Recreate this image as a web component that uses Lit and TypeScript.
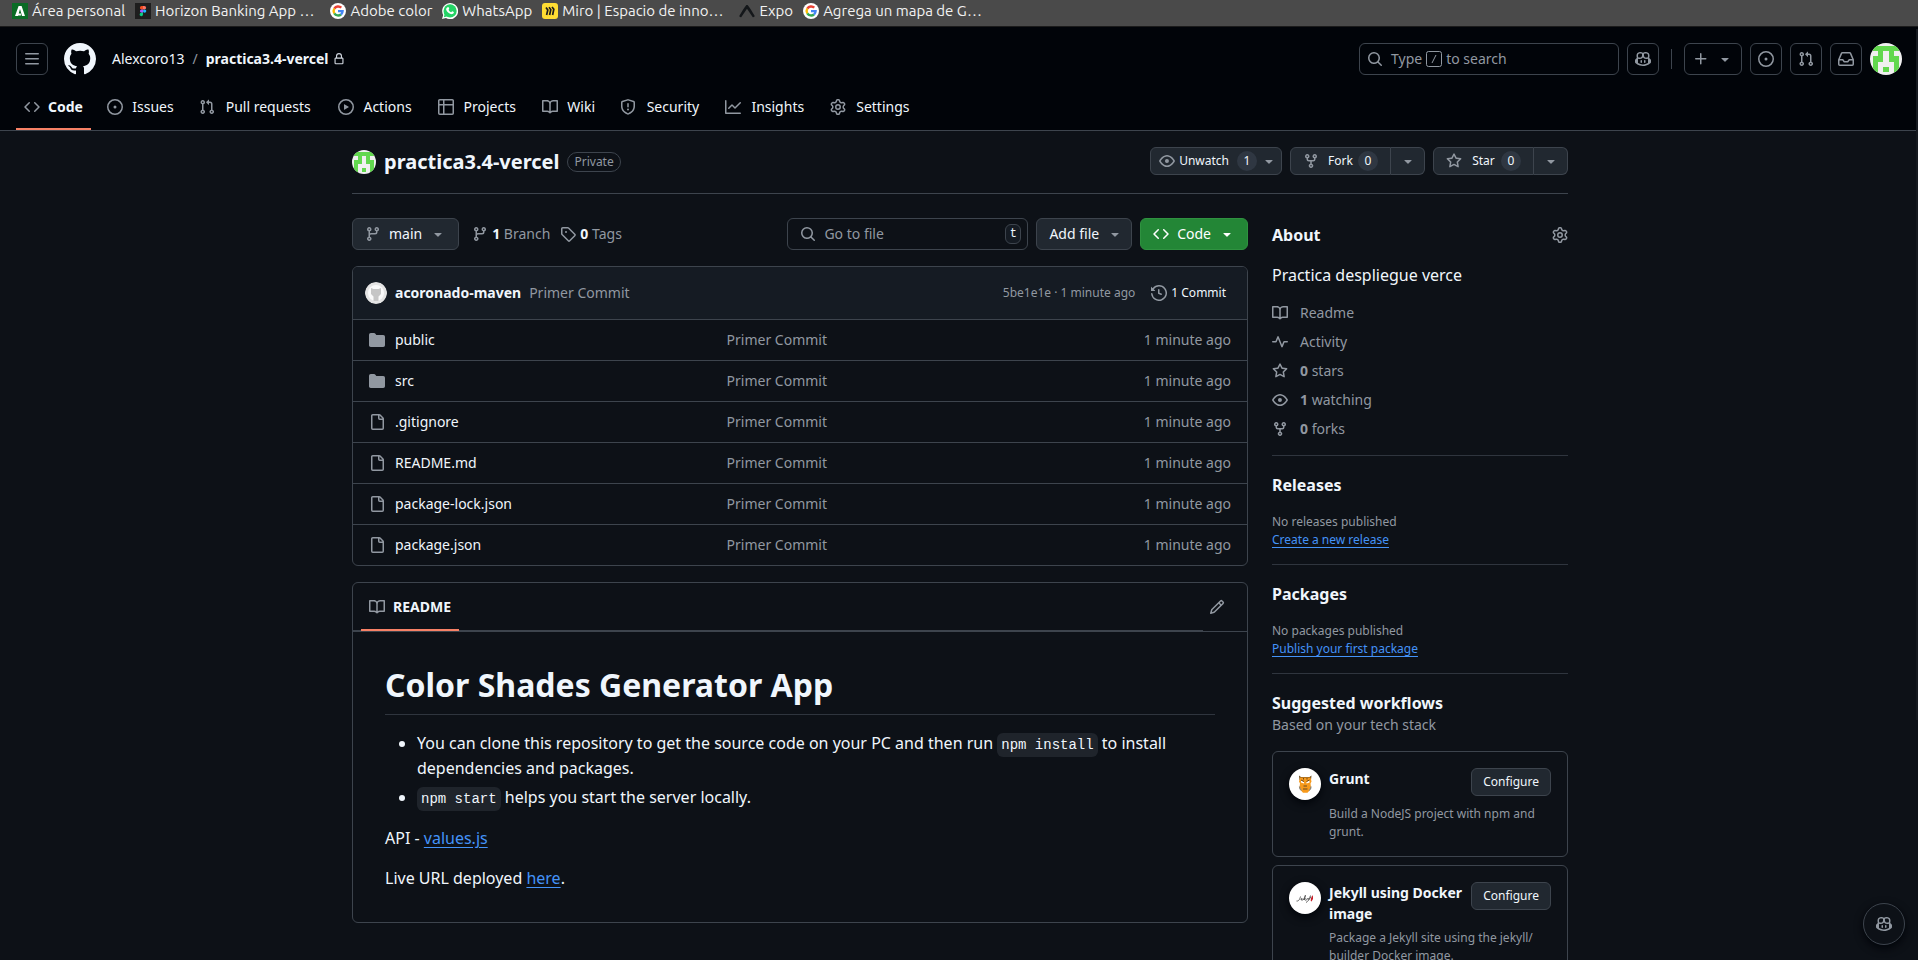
import { LitElement, html, css, svg, nothing } from "lit";
import { customElement } from "lit/decorators.js";

const paths: Record<string, string> = {
  menu: "M1 2.75A.75.75 0 0 1 1.75 2h12.5a.75.75 0 0 1 0 1.5H1.75A.75.75 0 0 1 1 2.75Zm0 5A.75.75 0 0 1 1.75 7h12.5a.75.75 0 0 1 0 1.5H1.75A.75.75 0 0 1 1 7.75ZM1.75 12h12.5a.75.75 0 0 1 0 1.5H1.75a.75.75 0 0 1 0-1.5Z",
  mark: "M8 0c4.42 0 8 3.58 8 8a8.013 8.013 0 0 1-5.45 7.59c-.4.08-.55-.17-.55-.38 0-.27.01-1.13.01-2.2 0-.75-.25-1.23-.54-1.48 1.78-.2 3.65-.88 3.65-3.95 0-.88-.31-1.59-.82-2.15.08-.2.36-1.02-.08-2.12 0 0-.67-.22-2.2.82-.64-.18-1.32-.27-2-.27-.68 0-1.36.09-2 .27-1.53-1.03-2.2-.82-2.2-.82-.44 1.1-.16 1.92-.08 2.12-.51.56-.82 1.28-.82 2.15 0 3.06 1.86 3.75 3.64 3.95-.23.2-.44.55-.51 1.07-.46.21-1.61.55-2.33-.66-.15-.24-.6-.83-1.23-.82-.67.01-.27.38.01.53.34.19.73.9.82 1.13.16.45.68 1.31 2.69.94 0 .67.01 1.3.01 1.49 0 .21-.15.45-.55.38A7.995 7.995 0 0 1 0 8c0-4.42 3.58-8 8-8Z",
  lock: "M4 4a4 4 0 0 1 8 0v2h.25c.966 0 1.75.784 1.75 1.75v5.5A1.75 1.75 0 0 1 12.25 15h-8.5A1.75 1.75 0 0 1 2 13.25v-5.5C2 6.784 2.784 6 3.75 6H4Zm8.25 3.5h-8.5a.25.25 0 0 0-.25.25v5.5c0 .138.112.25.25.25h8.5a.25.25 0 0 0 .25-.25v-5.5a.25.25 0 0 0-.25-.25ZM10.5 6V4a2.5 2.5 0 1 0-5 0v2Z",
  code: "m11.28 3.22 4.25 4.25a.75.75 0 0 1 0 1.06l-4.25 4.25a.749.749 0 0 1-1.275-.326.749.749 0 0 1 .215-.734L13.94 8l-3.72-3.72a.749.749 0 0 1 .326-1.275.749.749 0 0 1 .734.215Zm-6.56 0a.751.751 0 0 1 1.042.018.751.751 0 0 1 .018 1.042L2.06 8l3.72 3.72a.749.749 0 0 1-.326 1.275.749.749 0 0 1-.734-.215L.47 8.53a.75.75 0 0 1 0-1.06Z",
  issue: "M8 9.5a1.5 1.5 0 1 0 0-3 1.5 1.5 0 0 0 0 3ZM8 0a8 8 0 1 1 0 16A8 8 0 0 1 8 0ZM1.5 8a6.5 6.5 0 1 0 13 0 6.5 6.5 0 0 0-13 0Z",
  pull: "M1.5 3.25a2.25 2.25 0 1 1 3 2.122v5.256a2.251 2.251 0 1 1-1.5 0V5.372A2.25 2.25 0 0 1 1.5 3.25Zm5.677-.177L9.573.677A.25.25 0 0 1 10 .854V2.5h1A2.5 2.5 0 0 1 13.5 5v5.628a2.251 2.251 0 1 1-1.5 0V5a1 1 0 0 0-1-1h-1v1.646a.25.25 0 0 1-.427.177L7.177 3.427a.25.25 0 0 1 0-.354ZM3.75 2.5a.75.75 0 1 0 0 1.5.75.75 0 0 0 0-1.5Zm0 9.5a.75.75 0 1 0 0 1.5.75.75 0 0 0 0-1.5Zm8.25.75a.75.75 0 1 0 1.5 0 .75.75 0 0 0-1.5 0Z",
  play: "M8 0a8 8 0 1 1 0 16A8 8 0 0 1 8 0ZM1.5 8a6.5 6.5 0 1 0 13 0 6.5 6.5 0 0 0-13 0Zm4.879-2.773 4.264 2.559a.25.25 0 0 1 0 .428l-4.264 2.559A.25.25 0 0 1 6 10.559V5.442a.25.25 0 0 1 .379-.215Z",
  table: "M0 1.75C0 .784.784 0 1.75 0h12.5C15.216 0 16 .784 16 1.75v12.5A1.75 1.75 0 0 1 14.25 16H1.75A1.75 1.75 0 0 1 0 14.25ZM6.5 6.5v8h7.75a.25.25 0 0 0 .25-.25V6.5Zm8-1.5V1.75a.25.25 0 0 0-.25-.25H6.5V5Zm-13 1.5v7.75c0 .138.112.25.25.25H5v-8ZM5 5V1.5H1.75a.25.25 0 0 0-.25.25V5Z",
  book: "M0 1.75A.75.75 0 0 1 .75 1h4.253c1.227 0 2.317.59 3 1.501A3.743 3.743 0 0 1 11.006 1h4.245a.75.75 0 0 1 .75.75v10.5a.75.75 0 0 1-.75.75h-4.507a2.25 2.25 0 0 0-1.591.659l-.622.621a.75.75 0 0 1-1.06 0l-.622-.621A2.25 2.25 0 0 0 5.258 13H.75a.75.75 0 0 1-.75-.75Zm7.251 10.324.004-5.073-.002-2.253A2.25 2.25 0 0 0 5.003 2.5H1.5v9h3.757a3.75 3.75 0 0 1 1.994.574ZM8.755 4.75l-.004 7.322a3.752 3.752 0 0 1 1.992-.572H14.5v-9h-3.495a2.25 2.25 0 0 0-2.25 2.25Z",
  shield: "M7.467.133a1.748 1.748 0 0 1 1.066 0l5.25 1.68A1.75 1.75 0 0 1 15 3.48V7c0 1.566-.32 3.182-1.303 4.682-.983 1.498-2.585 2.813-5.032 3.855a1.697 1.697 0 0 1-1.33 0c-2.447-1.042-4.049-2.357-5.032-3.855C1.32 10.182 1 8.566 1 7V3.48a1.75 1.75 0 0 1 1.217-1.667Zm.61 1.429a.25.25 0 0 0-.153 0l-5.25 1.68a.25.25 0 0 0-.174.238V7c0 1.358.275 2.666 1.057 3.86.784 1.194 2.121 2.34 4.366 3.297a.196.196 0 0 0 .154 0c2.245-.956 3.582-2.104 4.366-3.298C13.225 9.666 13.5 8.36 13.5 7V3.48a.251.251 0 0 0-.174-.237l-5.25-1.68ZM8.75 4.75v3a.75.75 0 0 1-1.5 0v-3a.75.75 0 0 1 1.5 0ZM9 10.5a1 1 0 1 1-2 0 1 1 0 0 1 2 0Z",
  graph: "M1.5 1.75V13.5h13.75a.75.75 0 0 1 0 1.5H.75a.75.75 0 0 1-.75-.75V1.75a.75.75 0 0 1 1.5 0Zm14.28 2.53-5.25 5.25a.75.75 0 0 1-1.06 0L7 7.06 4.28 9.78a.751.751 0 0 1-1.042-.018.751.751 0 0 1-.018-1.042l3.25-3.25a.75.75 0 0 1 1.06 0L10 7.94l4.72-4.72a.751.751 0 0 1 1.042.018.751.751 0 0 1 .018 1.042Z",
  gear: "M8 0a8.2 8.2 0 0 1 .701.031C9.444.095 9.99.645 10.16 1.29l.288 1.107c.018.066.079.158.212.224.231.114.454.243.668.386.123.082.233.09.299.071l1.103-.303c.644-.176 1.392.021 1.82.63.27.385.506.792.704 1.218.315.675.111 1.422-.364 1.891l-.814.806c-.049.048-.098.147-.088.294.016.257.016.515 0 .772-.01.147.038.246.088.294l.814.806c.475.469.679 1.216.364 1.891a7.977 7.977 0 0 1-.704 1.217c-.428.61-1.176.807-1.82.63l-1.102-.302c-.067-.019-.177-.011-.3.071a5.909 5.909 0 0 1-.668.386c-.133.066-.194.158-.211.224l-.29 1.106c-.168.646-.715 1.196-1.458 1.26a8.006 8.006 0 0 1-1.402 0c-.743-.064-1.289-.614-1.458-1.26l-.289-1.106c-.018-.066-.079-.158-.212-.224a5.738 5.738 0 0 1-.668-.386c-.123-.082-.233-.09-.299-.071l-1.103.303c-.644.176-1.392-.021-1.82-.63a8.12 8.12 0 0 1-.704-1.218c-.315-.675-.111-1.422.363-1.891l.815-.806c.05-.048.098-.147.088-.294a6.214 6.214 0 0 1 0-.772c.01-.147-.038-.246-.088-.294l-.815-.806C.635 6.045.431 5.298.746 4.623a7.92 7.92 0 0 1 .704-1.217c.428-.61 1.176-.807 1.82-.63l1.102.302c.067.019.177.011.3-.071.214-.143.437-.272.668-.386.133-.066.194-.158.211-.224l.29-1.106C6.009.645 6.556.095 7.299.03 7.53.01 7.764 0 8 0Zm-.571 1.525c-.036.003-.108.036-.137.146l-.289 1.105c-.147.561-.549.967-.998 1.189-.173.086-.34.183-.5.29-.417.278-.97.423-1.529.27l-1.103-.303c-.109-.03-.175.016-.195.045-.22.312-.412.644-.573.99-.014.031-.021.11.059.19l.815.806c.411.406.562.957.53 1.456a4.709 4.709 0 0 0 0 .582c.032.499-.119 1.05-.53 1.456l-.815.806c-.081.08-.073.159-.059.19.162.346.353.677.573.989.02.03.085.076.195.046l1.102-.303c.56-.153 1.113-.008 1.53.27.161.107.328.204.501.29.447.222.85.629.997 1.189l.289 1.105c.029.109.101.143.137.146a6.6 6.6 0 0 0 1.142 0c.036-.003.108-.036.137-.146l.289-1.105c.147-.561.549-.967.998-1.189.173-.086.34-.183.5-.29.417-.278.97-.423 1.529-.27l1.103.303c.109.029.175-.016.195-.045.22-.313.411-.644.573-.99.014-.031.021-.11-.059-.19l-.815-.806c-.411-.406-.562-.957-.53-1.456a4.709 4.709 0 0 0 0-.582c-.032-.499.119-1.05.53-1.456l.815-.806c.081-.08.073-.159.059-.19a6.464 6.464 0 0 0-.573-.989c-.02-.03-.085-.076-.195-.046l-1.102.303c-.56.153-1.113.008-1.53-.27a4.44 4.44 0 0 0-.501-.29c-.447-.222-.85-.629-.997-1.189l-.289-1.105c-.029-.11-.101-.143-.137-.146a6.6 6.6 0 0 0-1.142 0ZM11 8a3 3 0 1 1-6 0 3 3 0 0 1 6 0ZM9.5 8a1.5 1.5 0 1 0-3.001.001A1.5 1.5 0 0 0 9.5 8Z",
  search: "M10.68 11.74a6 6 0 0 1-7.922-8.982 6 6 0 0 1 8.982 7.922l3.04 3.04a.749.749 0 0 1-.326 1.275.749.749 0 0 1-.734-.215ZM11.5 7a4.499 4.499 0 1 0-8.997 0A4.499 4.499 0 0 0 11.5 7Z",
  copilot: "M7.998 15.035c-4.562 0-7.873-2.914-7.998-3.749V9.338c.085-.628.677-1.686 1.588-2.065.013-.07.024-.143.036-.218.029-.183.06-.384.126-.612-.201-.508-.254-1.084-.254-1.656 0-.87.128-1.769.693-2.484.579-.733 1.494-1.124 2.724-1.261 1.206-.134 2.262.034 2.944.765.05.053.096.108.139.165.044-.057.094-.112.143-.165.682-.731 1.738-.899 2.944-.765 1.23.137 2.145.528 2.724 1.261.566.715.693 1.614.693 2.484 0 .572-.053 1.148-.254 1.656.066.228.098.429.126.612.012.076.024.148.037.218.924.385 1.522 1.471 1.591 2.095v1.872c0 .766-3.351 3.795-8.002 3.795Zm0-1.485c2.28 0 4.584-1.11 5.002-1.433V7.862l-.023-.116c-.49.21-1.075.291-1.727.291-1.146 0-2.059-.327-2.71-.991A3.222 3.222 0 0 1 8 6.303a3.24 3.24 0 0 1-.544.743c-.65.664-1.563.991-2.71.991-.652 0-1.236-.081-1.727-.291l-.023.116v4.255c.419.323 2.722 1.433 5.002 1.433ZM6.762 2.83c-.193-.206-.637-.413-1.682-.297-1.019.113-1.479.404-1.713.7-.247.312-.369.789-.369 1.554 0 .793.129 1.171.308 1.371.162.181.519.379 1.442.379.853 0 1.339-.235 1.638-.54.315-.322.527-.827.617-1.553.117-.935-.037-1.395-.241-1.614Zm4.155-.297c-1.044-.116-1.488.091-1.681.297-.204.219-.359.679-.242 1.614.091.726.303 1.231.618 1.553.299.305.784.54 1.638.54.922 0 1.28-.198 1.442-.379.179-.2.308-.578.308-1.371 0-.765-.123-1.242-.37-1.554-.233-.296-.693-.587-1.713-.7ZM6.25 9.037a.75.75 0 0 1 .75.75v1.501a.75.75 0 0 1-1.5 0V9.787a.75.75 0 0 1 .75-.75Zm4.25.75v1.501a.75.75 0 0 1-1.5 0V9.787a.75.75 0 0 1 1.5 0Z",
  plus: "M7.75 2a.75.75 0 0 1 .75.75V7h4.25a.75.75 0 0 1 0 1.5H8.5v4.25a.75.75 0 0 1-1.5 0V8.5H2.75a.75.75 0 0 1 0-1.5H7V2.75A.75.75 0 0 1 7.75 2Z",
  caret: "m4.427 7.427 3.396 3.396a.25.25 0 0 0 .354 0l3.396-3.396A.25.25 0 0 0 11.396 7H4.604a.25.25 0 0 0-.177.427Z",
  inbox: "M2.8 2.06A1.75 1.75 0 0 1 4.41 1h7.18c.7 0 1.333.417 1.61 1.06l2.74 6.395c.04.093.06.194.06.295v4.5A1.75 1.75 0 0 1 14.25 15H1.75A1.75 1.75 0 0 1 0 13.25v-4.5c0-.101.02-.202.06-.295Zm1.61.44a.25.25 0 0 0-.23.152L1.887 8H4.75a.75.75 0 0 1 .6.3L6.625 10h2.75l1.275-1.7a.75.75 0 0 1 .6-.3h2.863L11.82 2.652a.25.25 0 0 0-.23-.152Zm10.09 7h-2.875l-1.275 1.7a.75.75 0 0 1-.6.3h-3.5a.75.75 0 0 1-.6-.3L4.375 9.5H1.5v3.75c0 .138.112.25.25.25h12.5a.25.25 0 0 0 .25-.25Z",
  eye: "M8 2c1.981 0 3.671.992 4.933 2.078 1.27 1.091 2.187 2.345 2.637 3.023a1.62 1.62 0 0 1 0 1.798c-.45.678-1.367 1.932-2.637 3.023C11.67 13.008 9.981 14 8 14c-1.981 0-3.671-.992-4.933-2.078C1.797 10.83.88 9.576.43 8.898a1.62 1.62 0 0 1 0-1.798c.45-.677 1.367-1.931 2.637-3.022C4.33 2.992 6.019 2 8 2ZM1.679 7.932a.12.12 0 0 0 0 .136c.411.622 1.241 1.75 2.366 2.717C5.176 11.758 6.527 12.5 8 12.5c1.473 0 2.825-.742 3.955-1.715 1.124-.967 1.954-2.096 2.366-2.717a.12.12 0 0 0 0-.136c-.412-.621-1.242-1.75-2.366-2.717C10.824 4.242 9.473 3.5 8 3.5c-1.473 0-2.825.742-3.955 1.715-1.124.967-1.954 2.096-2.366 2.717ZM8 10a2 2 0 1 1-.001-3.999A2 2 0 0 1 8 10Z",
  fork: "M5 5.372v.878c0 .414.336.75.75.75h4.5a.75.75 0 0 0 .75-.75v-.878a2.25 2.25 0 1 1 1.5 0v.878a2.25 2.25 0 0 1-2.25 2.25h-1.5v2.128a2.251 2.251 0 1 1-1.5 0V8.5h-1.5A2.25 2.25 0 0 1 3.5 6.25v-.878a2.25 2.25 0 1 1 1.5 0ZM5 3.25a.75.75 0 1 0-1.5 0 .75.75 0 0 0 1.5 0Zm6.75.75a.75.75 0 1 0 0-1.5.75.75 0 0 0 0 1.5Zm-3 8.75a.75.75 0 1 0-1.5 0 .75.75 0 0 0 1.5 0Z",
  star: "M8 .25a.75.75 0 0 1 .673.418l1.882 3.815 4.21.612a.75.75 0 0 1 .416 1.279l-3.046 2.97.719 4.192a.751.751 0 0 1-1.088.791L8 12.347l-3.766 1.98a.75.75 0 0 1-1.088-.79l.72-4.194L.818 6.374a.75.75 0 0 1 .416-1.28l4.21-.611L7.327.668A.75.75 0 0 1 8 .25Zm0 2.445L6.615 5.5a.75.75 0 0 1-.564.41l-3.097.45 2.24 2.184a.75.75 0 0 1 .216.664l-.528 3.084 2.769-1.456a.75.75 0 0 1 .698 0l2.77 1.456-.53-3.084a.75.75 0 0 1 .216-.664l2.24-2.183-3.096-.45a.75.75 0 0 1-.564-.41L8 2.694Z",
  branch: "M9.5 3.25a2.25 2.25 0 1 1 3 2.122V6A2.5 2.5 0 0 1 10 8.5H6a1 1 0 0 0-1 1v1.128a2.251 2.251 0 1 1-1.5 0V5.372a2.25 2.25 0 1 1 1.5 0v1.836A2.493 2.493 0 0 1 6 7h4a1 1 0 0 0 1-1v-.628A2.25 2.25 0 0 1 9.5 3.25Zm-6 0a.75.75 0 1 0 1.5 0 .75.75 0 0 0-1.5 0Zm8.25-.75a.75.75 0 1 0 0 1.5.75.75 0 0 0 0-1.5ZM4.25 12a.75.75 0 1 0 0 1.5.75.75 0 0 0 0-1.5Z",
  tag: "M1 7.775V2.75C1 1.784 1.784 1 2.75 1h5.025c.464 0 .91.184 1.238.513l6.25 6.25a1.75 1.75 0 0 1 0 2.474l-5.026 5.026a1.75 1.75 0 0 1-2.474 0l-6.25-6.25A1.752 1.752 0 0 1 1 7.775Zm1.5 0c0 .066.026.13.073.177l6.25 6.25a.25.25 0 0 0 .354 0l5.025-5.025a.25.25 0 0 0 0-.354l-6.25-6.25a.25.25 0 0 0-.177-.073H2.75a.25.25 0 0 0-.25.25ZM6 5a1 1 0 1 1 0 2 1 1 0 0 1 0-2Z",
  history: "m.427 1.927 1.215 1.215a8.002 8.002 0 1 1-1.6 5.685.75.75 0 1 1 1.493-.154 6.5 6.5 0 1 0 1.18-4.458l1.358 1.358A.25.25 0 0 1 3.896 6H.25A.25.25 0 0 1 0 5.75V2.104a.25.25 0 0 1 .427-.177ZM7.75 4a.75.75 0 0 1 .75.75v2.992l2.028.812a.75.75 0 0 1-.557 1.392l-2.5-1A.751.751 0 0 1 7 8.25v-3.5A.75.75 0 0 1 7.75 4Z",
  folder: "M1.75 1A1.75 1.75 0 0 0 0 2.75v10.5C0 14.216.784 15 1.75 15h12.5A1.75 1.75 0 0 0 16 13.25v-8.5A1.75 1.75 0 0 0 14.25 3H7.5a.25.25 0 0 1-.2-.1l-.9-1.2C6.07 1.26 5.55 1 5 1H1.75Z",
  file: "M2 1.75C2 .784 2.784 0 3.75 0h6.586c.464 0 .909.184 1.237.513l2.914 2.914c.329.328.513.773.513 1.237v9.586A1.75 1.75 0 0 1 13.25 16h-9.5A1.75 1.75 0 0 1 2 14.25Zm1.75-.25a.25.25 0 0 0-.25.25v12.5c0 .138.112.25.25.25h9.5a.25.25 0 0 0 .25-.25V6h-2.75A1.75 1.75 0 0 1 9 4.25V1.5Zm6.75.062V4.25c0 .138.112.25.25.25h2.688l-.011-.013-2.914-2.914-.013-.011Z",
  pencil: "M11.013 1.427a1.75 1.75 0 0 1 2.474 0l1.086 1.086a1.75 1.75 0 0 1 0 2.474l-8.61 8.61c-.21.21-.47.364-.756.445l-3.251.93a.75.75 0 0 1-.927-.928l.929-3.25c.081-.286.235-.547.445-.758l8.61-8.61Zm.176 4.823L9.75 4.81l-6.286 6.287a.253.253 0 0 0-.064.108l-.558 1.953 1.953-.558a.253.253 0 0 0 .108-.064Zm1.238-3.763a.25.25 0 0 0-.354 0L10.811 3.75l1.439 1.44 1.263-1.263a.25.25 0 0 0 0-.354Z",
  pulse: "M6 2c.306 0 .582.187.696.471L10 10.731l1.304-3.26A.751.751 0 0 1 12 7h3.25a.75.75 0 0 1 0 1.5h-2.742l-1.812 4.528a.751.751 0 0 1-1.392 0L6 4.77 4.696 8.03A.75.75 0 0 1 4 8.5H.75a.75.75 0 0 1 0-1.5h2.742l1.812-4.529A.751.751 0 0 1 6 2Z",
};

const icon = (name: string, size = 16) => html`<svg
  class="icon"
  width=${size}
  height=${size}
  viewBox="0 0 16 16"
  fill="currentColor"
  aria-hidden="true"
>
  <path d=${paths[name]}></path>
</svg>`;

const identicon = (size: number) => html`<svg class="avatar" width=${size} height=${size} viewBox="0 0 12 12" aria-hidden="true">
  <rect width="12" height="12" fill="#f0f0f0"></rect>
  <path
    fill="#62d84e"
    shape-rendering="crispEdges"
    d="M1 1h10v2H1zM3 3h2v2H3zM7 3h2v2H7zM1 5h4v2H1zM7 5h4v2H7zM1 7h2v4H1zM9 7h2v4H9zM5 9h2v2H5z"
  ></path>
</svg>`;

const bookmarkArt: Record<string, unknown> = {
  area: svg`<rect width="16" height="16" fill="#0b6b25"/><path d="M3 13 6.6 3h3L13 13h-3L8 6 6 13zM6.5 10.5h2.4v2H6z" fill="#fff"/>`,
  figma: svg`<rect width="16" height="16" fill="#1e1e1e"/>
    <path d="M8 3H6.6a1.7 1.7 0 0 0 0 3.4H8z" fill="#f24e1e"/><path d="M8 3h1.4a1.7 1.7 0 0 1 0 3.4H8z" fill="#ff7262"/>
    <path d="M8 6.4H6.6a1.7 1.7 0 0 0 0 3.4H8z" fill="#a259ff"/><circle cx="9.6" cy="8.1" r="1.7" fill="#1abcfe"/>
    <path d="M8 9.8H6.6A1.7 1.7 0 1 0 8 11.5z" fill="#0acf83"/>`,
  google: svg`<circle cx="8" cy="8" r="8" fill="#fff"/>
    <g fill="none" stroke-width="2.4">
      <path d="M4.3 5.6A4.6 4.6 0 0 1 11.3 4.7" stroke="#ea4335"/>
      <path d="M4.3 10.4A4.6 4.6 0 0 1 4.3 5.6" stroke="#fbbc05"/>
      <path d="M11 11.5A4.6 4.6 0 0 1 4.3 10.4" stroke="#34a853"/>
      <path d="M8 8.1H12.6A4.6 4.6 0 0 1 11 11.5" stroke="#4285f4"/>
    </g>`,
  whatsapp: svg`<path d="M0 16 1.2 12A8 8 0 1 1 4 14.9z" fill="#fff"/><circle cx="8.1" cy="7.9" r="6.6" fill="#25d366"/><path d="m1.8 14.3.9-3.2 2.3 2.3z" fill="#25d366"/>
    <path d="M5.6 4.3c.7-.6 1.1-.1 1.6 1.3.2.6-.7 1-.6 1.3.6 1.1 1.4 1.8 2.5 2.3.4.1.8-1.1 1.3-.9 1.5.6 1.7.8 1.3 1.7-.5 1-1.7 1.4-3 1-2.2-.7-3.800-2.200-4.500-4.200-.3-1 .5-2 1.400-2.500z" fill="#fff"/>`,
  miro: svg`<rect width="16" height="16" rx="3" fill="#ffdd33"/>
    <path d="M4 4.500 5.800 7 4.600 12M7 4.200 8.800 6.600 7.600 12M10 4 11.800 6.200 10.600 12" fill="none" stroke="#1c1c1e" stroke-width="1.700"/>`,
  expo: svg`<path d="M7 2.400c.4-.6 1.600-.6 2 0 2.200 2.700 4.400 6.700 6.600 10.300.5.900-1.300 1.900-2 1.200L8 5.800 2.400 13.900c-.7.700-2.500-.3-2-1.200C2.600 9.100 4.800 5.100 7 2.400z" fill="#14171a"/>`,
};

const bookmarks: [string, string, boolean][] = [
  ["area", "Área personal", false],
  ["figma", "Horizon Banking App …", true],
  ["google", "Adobe color", false],
  ["whatsapp", "WhatsApp", false],
  ["miro", "Miro | Espacio de inno…", true],
  ["expo", "Expo", false],
  ["google", "Agrega un mapa de G…", true],
];

const tabs: [string, string][] = [
  ["code", "Code"],
  ["issue", "Issues"],
  ["pull", "Pull requests"],
  ["play", "Actions"],
  ["table", "Projects"],
  ["book", "Wiki"],
  ["shield", "Security"],
  ["graph", "Insights"],
  ["gear", "Settings"],
];

const files: [string, string][] = [
  ["folder", "public"],
  ["folder", "src"],
  ["file", ".gitignore"],
  ["file", "README.md"],
  ["file", "package-lock.json"],
  ["file", "package.json"],
];

const meta: [string, string, string][] = [
  ["book", "", "Readme"],
  ["pulse", "", "Activity"],
  ["star", "0", "stars"],
  ["eye", "1", "watching"],
  ["fork", "0", "forks"],
];

const gruntLogo = svg`
  <path d="M10 7.500l2 1.500h8.500l2-1.500-.5 4.500H10.500z" fill="#6b4a1e"/>
  <path d="M11 9.500h10.500l1 4-1 2 .5 4-1.500 3-2 2.300h-4.500l-2-2.300-1.500-3 .5-4-1-2z" fill="#f79a1c"/>
  <path d="M12 12.500l3 1.500v1.500l-3-1zM20.500 12.500l-3 1.500v1.500l3-1z" fill="#fff"/>
  <path d="M12 12l3 1.500M20.500 12l-3 1.500M14.500 18h3.500M14 21h4.500M14.500 10v1.500M18 10v1.500" stroke="#6b4a1e" fill="none"/>
  <path d="M10.500 18.500q0 3 2 4M22 18.500q0 3-2 4" stroke="#8a8478" stroke-width="1.300" fill="none"/>`;

const jekyllLogo = svg`
  <path d="M7.500 19c2.500.5 3.500-2.500 4-4.500M12 18c1.500-.5 1.500-2 .5-1.500s-.5 2 1 1.500 3-3 3-4.500-1.500 3-1.500 4.500c.5-2 2-2 1-1s.5 1.500 1.500 1c1-1 .5-2 1-1.500s1 0 1.500-.5M19.500 18c1-1.500 1.500-3 2-4.500M17 20.500c1.500-.5 4-4 5-6" stroke="#444" stroke-width=".8" fill="none"/>
  <path d="M22 16l2-3v4l-1.500 2.500-.8-.5z" fill="#c8202a"/>`;

const workflows: [unknown, string, string][] = [
  [gruntLogo, "Grunt", "Build a NodeJS project with npm and grunt."],
  [jekyllLogo, "Jekyll using Docker image", "Package a Jekyll site using the jekyll/ builder Docker image."],
];

@customElement("app-root")
export class AppRoot extends LitElement {
  static styles = css`
    :host {
      display: flex;
      flex-direction: column;
      height: 100vh;
      overflow: hidden;
      position: relative;
      background: #0d1117;
      color: #f0f6fc;
      font: 14px/20px "Noto Sans", sans-serif;
    }
    * { box-sizing: border-box; }
    a { color: inherit; text-decoration: none; }
    h1, h2, h3, p, ul { margin: 0; padding: 0; }
    button, input { font: inherit; color: inherit; }
    .icon { display: block; flex: none; color: #9198a1; }
    .avatar { display: block; flex: none; border-radius: 50%; }
    .muted { color: #9198a1; }

    .bookmarks {
      flex: none;
      display: flex;
      align-items: flex-start;
      gap: 10px;
      height: 27px;
      padding: 0 12px;
      background: #4a4a4a;
      border-bottom: 1px solid #1b1b1b;
      color: #f2f2f2;
      font: 15px/22px "Ubuntu", "Noto Sans", sans-serif;
      white-space: nowrap;
    }
    .bookmark { display: flex; align-items: center; gap: 4px; }
    .bookmark.cut { padding-right: 6px; }

    .header { flex: none; background: #010409; border-bottom: 1px solid #3d444d; }
    .bar { display: flex; align-items: center; padding: 16px 16px 0; gap: 8px; }
    .square {
      display: flex;
      align-items: center;
      justify-content: center;
      width: 32px;
      height: 32px;
      padding: 0;
      background: none;
      border: 1px solid #3d444d;
      border-radius: 6px;
    }
    .square.wide { width: 58px; gap: 8px; }
    .logo { margin: 0 8px; color: #f0f6fc; }
    .logo .icon { color: inherit; }
    .crumbs { display: flex; align-items: center; gap: 8px; margin-right: auto; }
    .crumbs strong { display: flex; align-items: center; gap: 4px; }
    .crumbs .icon { color: #d1d7e0; }
    .search {
      display: flex;
      align-items: center;
      gap: 8px;
      width: 260px;
      height: 32px;
      padding: 0 7px;
      background: none;
      border: 1px solid #3d444d;
      border-radius: 6px;
      color: #9198a1;
    }
    .search .hint { display: flex; align-items: center; gap: 4px; }
    .slash { display: block; flex: none; }
    .rule { width: 1px; height: 20px; margin: 0 4px; background: #3d444d; }
    .tabs { display: flex; gap: 8px; padding: 8px 16px 0; }
    .tab { display: flex; align-items: center; gap: 8px; height: 47px; padding: 0 8px; }
    .tab.on { box-shadow: inset 0 -2px #f78166; font-weight: 700; }
    .label { display: grid; justify-items: center; }
    .label::after {
      content: attr(data-text);
      height: 0;
      overflow: hidden;
      visibility: hidden;
      font-weight: 700;
    }

    .scroll { flex: 1; min-height: 0; margin-right: -2px; overflow: hidden; }
    .page { max-width: 1280px; margin: 0 auto; padding: 0 32px; }
    .title { display: flex; align-items: center; gap: 8px; padding: 16px 0; border-bottom: 1px solid #3d444d; }
    .title h1 { font: 700 20px/30px "Noto Sans", sans-serif; }
    .badge {
      padding: 0 6px;
      border: 1px solid #3d444d;
      border-radius: 20px;
      color: #9198a1;
      font-size: 12px;
      line-height: 18px;
    }
    .actions { display: flex; align-self: flex-start; gap: 8px; margin-left: auto; }
    .btn {
      display: flex;
      align-items: center;
      gap: 8px;
      height: 32px;
      padding: 0 12px;
      background: #212830;
      border: 1px solid #3d444d;
      border-radius: 6px;
      white-space: nowrap;
    }
    .btn.tight { padding-right: 8px; }
    .btn.green { background: #238636; border-color: #2f9240; color: #fff; }
    .btn.green .icon { color: #fff; }
    .btn.small { height: 28px; font-size: 12px; line-height: 18px; gap: 4px; }
    .btn.watch { padding: 0 4px 0 8px; }
    .btn.left { border-radius: 6px 0 0 6px; }
    .btn.right { border-radius: 0 6px 6px 0; border-left: 0; padding: 0 8px 0 9px; }
    .split { display: flex; }
    .word { min-width: 31px; padding-left: 4px; text-align: center; }
    .count {
      min-width: 20px;
      padding: 0 6px;
      border-radius: 20px;
      background: #2f3742;
      line-height: 20px;
      text-align: center;
    }
    .watch .count { margin-left: 4px; }

    .columns { display: grid; grid-template-columns: minmax(0, 1fr) 296px; gap: 24px; padding-top: 24px; }
    .tools { display: flex; align-items: center; gap: 8px; }
    .refs { display: flex; gap: 10px; margin: 0 auto 0 5px; }
    .refs a { display: flex; align-items: center; gap: 4px; }
    .refs strong { color: #f0f6fc; }
    .find {
      display: flex;
      align-items: center;
      gap: 8px;
      width: 241px;
      height: 32px;
      padding: 0 6px 0 12px;
      border: 1px solid #3d444d;
      border-radius: 6px;
    }
    .find input { flex: 1; min-width: 0; height: 20px; padding: 0; border: 0; outline: 0; background: none; }
    .find input::placeholder { color: #9198a1; opacity: 1; }
    kbd {
      width: 16px;
      border: 1px solid #3d444d;
      border-radius: 6px;
      background: #151b23;
      font: 12px/18px "Liberation Mono", monospace;
      text-align: center;
    }
    .panel { margin-top: 16px; border: 1px solid #3d444d; border-radius: 6px; overflow: hidden; }
    .commit { display: flex; align-items: center; gap: 8px; height: 52px; padding: 0 21px 0 12px; background: #151b23; }
    .commit .sha { margin-left: auto; font-size: 12px; }
    .commit .log { display: flex; align-items: center; gap: 4px; margin-left: 8px; font-size: 12px; }
    table { width: 100%; table-layout: fixed; border-collapse: separate; border-spacing: 0; }
    td { height: 41px; padding: 0 16px; border-top: 1px solid #3d444d; }
    .c-name { width: 40%; }
    .c-age { width: 20%; }
    td.age { text-align: right; }
    .name { display: flex; align-items: center; gap: 10px; }

    .readme-head { display: flex; align-items: center; height: 49px; border-bottom: 1px solid #3d444d; }
    .readme-head nav { flex: 1; display: flex; height: 48px; padding: 0 8px; box-shadow: inset 0 -1px #3d444d; }
    .readme-head .tab { height: 48px; }
    .edit { display: flex; align-items: center; justify-content: center; width: 28px; height: 28px; margin-right: 16px; padding: 0; border: 0; background: none; }
    .prose { padding: 32px; font-size: 16px; line-height: 24px; }
    .prose h1 { padding-bottom: 8px; border-bottom: 1px solid #2f353e; font-size: 32px; line-height: 42px; font-weight: 700; }
    .prose ul { margin-top: 16px; padding-left: 32px; line-height: 25px; }
    .prose li + li { margin-top: 4px; }
    .prose p { margin-top: 16px; }
    code { padding: 4px; border-radius: 6px; background: #1f242b; font: 14px/16px "Liberation Mono", monospace; }
    .link { color: #4493f8; text-decoration: underline; text-underline-offset: 3px; }

    .side section { padding: 17px 0 15px; border-bottom: 1px solid #2f353e; }
    .side section:first-child { padding: 5px 0 16px; }
    .side section:last-child { border: 0; }
    .side h2 { font-size: 16px; line-height: 24px; font-weight: 700; }
    .side .head { display: flex; align-items: center; justify-content: space-between; margin-bottom: 16px; }
    .edit-about { padding: 0; border: 0; background: none; }
    .about { font-size: 16px; line-height: 24px; margin-bottom: 15px; }
    .facts { display: grid; gap: 8px; list-style: none; line-height: 21px; }
    .facts a { display: flex; align-items: center; gap: 12px; }
    .small-text { font-size: 12px; line-height: 18px; }
    .card {
      display: grid;
      grid-template-columns: 32px minmax(0, 1fr);
      gap: 8px;
      margin-top: 16px;
      padding: 16px 16px 15px;
      border: 1px solid #3d444d;
      border-radius: 6px;
    }
    .card + .card { margin-top: 8px; }
    .card .avatar { background: #fff; box-shadow: 0 3px 8px #010409; }
    .card-head { display: flex; align-items: flex-start; justify-content: space-between; gap: 8px; }
    .card h3 { font-size: 14px; line-height: 21px; font-weight: 700; }
    .card .btn { margin-bottom: 4px; padding: 0 11px; }
    .card p { margin-top: 5px; }

    .fab {
      position: absolute;
      right: 13px;
      bottom: 15px;
      display: flex;
      align-items: center;
      justify-content: center;
      width: 42px;
      height: 42px;
      padding: 0;
      border: 1px solid #3d444d;
      border-radius: 50%;
      background: #0d1117;
      box-shadow: 0 3px 8px #010409;
    }
    .thumb { position: absolute; top: 29px; right: 0; bottom: 25%; width: 2px; background: #15191f; }
  `;

  render() {
    return html`
      <nav class="bookmarks" aria-label="Bookmarks">
        ${bookmarks.map(
          ([art, text, cut]) => html`<a class="bookmark ${cut ? "cut" : ""}" href="#"
            ><svg width="16" height="16" viewBox="0 0 16 16" aria-hidden="true">${bookmarkArt[art]}</svg><span>${text}</span></a
          >`
        )}
      </nav>
      <header class="header">
        <div class="bar">
          <button class="square" aria-label="Open menu">${icon("menu")}</button>
          <a class="logo" href="#" aria-label="Homepage">${icon("mark", 32)}</a>
          <div class="crumbs">
            <a href="#">Alexcoro13</a><span class="muted">/</span>
            <strong><a href="#">practica3.4-vercel</a>${icon("lock", 12)}</strong>
          </div>
          <button class="search">
            ${icon("search")}
            <span class="hint"
              >Type
              <svg class="slash" width="16" height="16" viewBox="0 0 16 16" fill="none" stroke="currentColor" aria-label="/">
                <rect x=".5" y=".5" width="15" height="15" rx="2"></rect>
                <path d="M6 12 10 4"></path></svg
              >to search</span
            >
          </button>
          <button class="square" aria-label="Copilot">${icon("copilot")}</button>
          <span class="rule"></span>
          <button class="square wide" aria-label="Create new">${icon("plus")}${icon("caret")}</button>
          <button class="square" aria-label="Issues">${icon("issue")}</button>
          <button class="square" aria-label="Pull requests">${icon("pull")}</button>
          <button class="square" aria-label="Notifications">${icon("inbox")}</button>
          ${identicon(32)}
        </div>
        <nav class="tabs" aria-label="Repository">
          ${tabs.map(
            ([glyph, text], i) => html`<a class="tab ${i ? "" : "on"}" href="#"
              >${icon(glyph)}<span class="label" data-text=${text}>${text}</span></a
            >`
          )}
        </nav>
      </header>
      <div class="scroll">
        <main class="page">
          <div class="title">
            ${identicon(24)}
            <h1><a href="#">practica3.4-vercel</a></h1>
            <span class="badge">Private</span>
            <div class="actions">
              <button class="btn small watch">
                ${icon("eye")}<span>Unwatch</span><span class="count">1</span>${icon("caret")}
              </button>
              ${[["fork", "Fork"], ["star", "Star"]].map(
                ([glyph, text]) => html`<div class="split">
                  <button class="btn small left">${icon(glyph)}<span class="word">${text}</span><span class="count">0</span></button>
                  <button class="btn small right" aria-label="${text} options">${icon("caret")}</button>
                </div>`
              )}
            </div>
          </div>
          <div class="columns">
            <div>
              <div class="tools">
                <button class="btn">${icon("branch")}<span>main</span>${icon("caret")}</button>
                <div class="refs muted">
                  <a href="#">${icon("branch")}<span><strong>1</strong> Branch</span></a>
                  <a href="#">${icon("tag")}<span><strong>0</strong> Tags</span></a>
                </div>
                <label class="find">${icon("search")}<input type="text" placeholder="Go to file" aria-label="Go to file" /><kbd>t</kbd></label>
                <button class="btn tight"><span>Add file</span>${icon("caret")}</button>
                <button class="btn green">${icon("code")}<span>Code</span>${icon("caret")}</button>
              </div>
              <section class="panel">
                <div class="commit">
                  <svg class="avatar" width="22" height="22" viewBox="0 0 22 22" aria-hidden="true">
                    <circle cx="11" cy="11" r="11" fill="#e4e4e4"></circle>
                    <circle cx="11" cy="11" r="8" fill="#fafafa"></circle>
                    <path d="M6 6 8.500 7h5L16 6v6l-2.500 2.500V19h-5v-4.500L6 12z" fill="#c6c6c6"></path>
                  </svg>
                  <strong>acoronado-maven</strong><a class="muted" href="#">Primer Commit</a>
                  <span class="sha muted">5be1e1e · 1 minute ago</span>
                  <a class="log" href="#">${icon("history")}<span>1 Commit</span></a>
                </div>
                <table aria-label="Files">
                  <colgroup><col class="c-name" /><col /><col class="c-age" /></colgroup>
                  <tbody>
                    ${files.map(
                      ([glyph, text]) => html`<tr>
                        <td><a class="name" href="#">${icon(glyph)}${text}</a></td>
                        <td class="muted">Primer Commit</td>
                        <td class="muted age">1 minute ago</td>
                      </tr>`
                    )}
                  </tbody>
                </table>
              </section>
              <section class="panel">
                <div class="readme-head">
                  <nav aria-label="Repository files"><a class="tab on" href="#">${icon("book")}<span>README</span></a></nav>
                  <button class="edit" aria-label="Edit file">${icon("pencil")}</button>
                </div>
                <article class="prose">
                  <h1>Color Shades Generator App</h1>
                  <ul>
                    <li>You can clone this repository to get the source code on your PC and then run <code>npm install</code> to install dependencies and packages.</li>
                    <li><code>npm start</code> helps you start the server locally.</li>
                  </ul>
                  <p>API - <a class="link" href="#">values.js</a></p>
                  <p>Live URL deployed <a class="link" href="#">here</a>.</p>
                </article>
              </section>
            </div>
            <aside class="side">
              <section>
                <div class="head">
                  <h2>About</h2>
                  <button class="edit-about" aria-label="Edit repository details">${icon("gear")}</button>
                </div>
                <p class="about">Practica despliegue verce</p>
                <ul class="facts muted">
                  ${meta.map(
                    ([glyph, n, text]) => html`<li>
                      <a href="#">${icon(glyph)}<span>${n ? html`<strong>${n}</strong> ` : nothing}${text}</span></a>
                    </li>`
                  )}
                </ul>
              </section>
              <section>
                <div class="head"><h2>Releases</h2></div>
                <p class="small-text muted">No releases published</p>
                <p class="small-text"><a class="link" href="#">Create a new release</a></p>
              </section>
              <section>
                <div class="head"><h2>Packages</h2></div>
                <p class="small-text muted">No packages published</p>
                <p class="small-text"><a class="link" href="#">Publish your first package</a></p>
              </section>
              <section>
                <h2>Suggested workflows</h2>
                <p class="muted">Based on your tech stack</p>
                ${workflows.map(
                  ([art, name, text]) => html`<div class="card">
                    <svg class="avatar" width="32" height="32" viewBox="0 0 32 32" aria-hidden="true">${art}</svg>
                    <div>
                      <div class="card-head">
                        <h3>${name}</h3>
                        <button class="btn small">Configure</button>
                      </div>
                      <p class="small-text muted">${text}</p>
                    </div>
                  </div>`
                )}
              </section>
            </aside>
          </div>
        </main>
      </div>
      <button class="fab" aria-label="Chat with Copilot">${icon("copilot")}</button>
      <span class="thumb"></span>
    `;
  }
}
